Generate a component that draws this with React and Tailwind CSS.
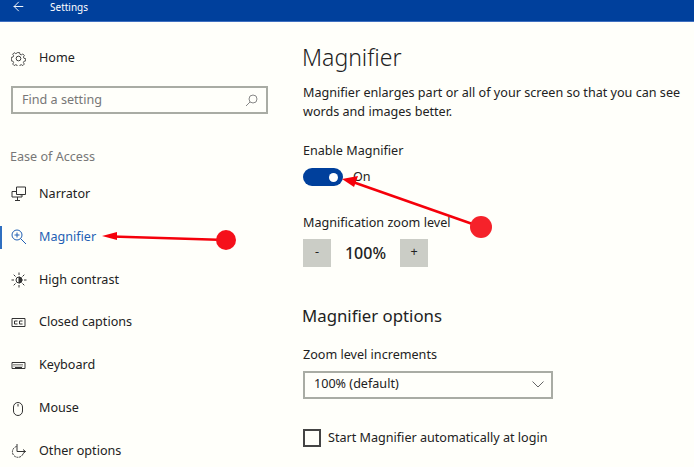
import { ArrowLeft } from 'lucide-react'

const font = { fontFamily: '"Noto Sans", sans-serif' }

function Icon({ children, color = '#333' }) {
  return (
    <svg width="16" height="16" viewBox="0 0 16 16" fill="none" stroke={color} strokeWidth="1">
      {children}
    </svg>
  )
}

const navItems = [
  {
    label: 'Narrator',
    icon: (
      <>
        <path d="M5.500 1h9v7.500h-9z" />
        <path d="M5.500 5.500h-4.500v5.500h10v-2.500M6.500 11v3M4 14.500h5M10 8.500v1" />
      </>
    ),
  },
  {
    label: 'Magnifier',
    active: true,
    icon: (
      <>
        <circle cx="6" cy="6" r="5" />
        <path d="M9.500 9.500l5.500 5.500M3.500 6h5M6 3.500v5" />
      </>
    ),
  },
  {
    label: 'High contrast',
    icon: (
      <>
        <circle cx="8" cy="8" r="3" />
        <path d="M8 5a3 3 0 010 6z" fill="#333" />
        <path d="M8 .5v2.500M8 13v2.500M.5 8H3M13 8h2.500M2.700 2.700l1.800 1.800M11.500 11.500l1.800 1.800M2.700 13.300l1.800-1.800M11.500 4.500l1.800-1.800" />
      </>
    ),
  },
  {
    label: 'Closed captions',
    icon: (
      <>
        <path d="M1 3.500h13v8H1z" />
        <path d="M6.500 6h-3v3h3M11.500 6h-3v3h3" />
      </>
    ),
  },
  {
    label: 'Keyboard',
    icon: (
      <>
        <path d="M1 4.500h13v6H1z" />
        <path d="M2.500 6.500h10M2.500 8h10" strokeDasharray="1 1" />
        <path d="M4 9.500h7" />
      </>
    ),
  },
  {
    label: 'Mouse',
    icon: (
      <>
        <rect x="2.500" y="1.500" width="9" height="13" rx="4.500" />
        <path d="M7 3v2.500" />
      </>
    ),
  },
  {
    label: 'Other options',
    icon: (
      <>
        <path d="M5.500 3.500a5.500 5.500 0 106.800 6.500" strokeDasharray="2 .8" />
        <path d="M6 1v7.500h8.500M12 6.500l2.500 2-2.500 2" />
      </>
    ),
  },
]

export default function App() {
  return (
    <div className="relative h-[467px] w-[694px] overflow-hidden bg-[#fffffa] text-[12.6px] text-[#222]" style={font}>
      <header className="flex h-[22px] items-center border-b border-[#3f6fc0] bg-[#00409c] text-white">
        <div className="flex w-[50px] justify-center pr-[13px] pb-[8px]">
          <ArrowLeft size={15} strokeWidth={1.5} />
        </div>
        <span className="pb-[7px] text-[10px]">Settings</span>
      </header>

      <div className="flex">
        <aside className="w-[290px] shrink-0">
          <div className="mt-[22px] flex h-[28px] items-center gap-[13px] pl-[11px]">
            <svg width="15" height="15" viewBox="0 0 16 16" fill="none" stroke="#333" strokeWidth="1">
              <circle cx="8" cy="8" r="2.500" />
              <path d="M6.700 1h2.600l.4 2 1.600.7 1.800-1.100 1.800 1.800-1.100 1.800.7 1.600 2 .4v2.600l-2 .4-.7 1.600 1.100 1.800-1.800 1.800-1.800-1.100-1.600.7-.4 2H6.700l-.4-2-1.600-.7-1.800 1.100-1.800-1.800 1.100-1.800-.7-1.600-2-.4V6.700l2-.4.7-1.600L1.100 2.900l1.800-1.800 1.800 1.100 1.600-.7z" transform="translate(.8 .8) scale(.9)" />
            </svg>
            <span>Home</span>
          </div>

          <div className="mt-[14px] ml-[11px] flex h-[28px] w-[257px] items-center justify-between border-2 border-[#a9aca4] pr-[8px] pl-[9px] text-[#777]">
            <span>Find a setting</span>
            <svg width="13" height="13" viewBox="0 0 13 13" fill="none" stroke="#888" strokeWidth="1">
              <circle cx="8" cy="5" r="4" />
              <path d="M5 8l-4 4" />
            </svg>
          </div>

          <div className="mt-[34px] ml-[10px] leading-[18px] text-[#777]">Ease of Access</div>

          <nav className="mt-[7px]">
            {navItems.map((item) => (
              <div
                key={item.label}
                className={`flex h-[42.83px] items-center gap-[12px] pl-[11px] ${item.active ? 'text-[#1f5fb4]' : ''}`}
              >
                {item.active && <div className="absolute left-0 h-[23px] w-[2px] bg-[#2f6fc0]" />}
                <Icon color={item.active ? '#1f5fb4' : '#333'}>{item.icon}</Icon>
                <span>{item.label}</span>
              </div>
            ))}
          </nav>
        </aside>

        <main className="flex-1 pl-[13px]">
          <h1 className="mt-[17px] -ml-[1px] text-[23px] leading-[36px] font-light text-[#222]">Magnifier</h1>
          <p className="mt-[8px] w-[385px] leading-[19px]">
            Magnifier enlarges part or all of your screen so that you can see words and images better.
          </p>

          <div className="mt-[21px] leading-[18px]">Enable Magnifier</div>
          <div className="mt-[8px] flex items-center gap-[10px]">
            <div className="flex h-[18px] w-[40px] items-center justify-end rounded-full bg-[#00409c] pr-[5px]">
              <div className="h-[9px] w-[9px] rounded-full bg-white" />
            </div>
            <span>On</span>
          </div>

          <div className="mt-[27px] leading-[18px]">Magnification zoom level</div>
          <div className="mt-[7px] flex items-center">
            <div className="flex h-[28px] w-[28px] items-center justify-center bg-[#cbcdc6]">-</div>
            <div className="w-[69px] text-center text-[16px] font-medium">100%</div>
            <div className="flex h-[28px] w-[28px] items-center justify-center bg-[#cbcdc6]">+</div>
          </div>

          <h2 className="mt-[35px] -ml-[1px] text-[16.8px] leading-[28px]">Magnifier options</h2>
          <div className="mt-[16px] leading-[18px]">Zoom level increments</div>
          <div className="mt-[7px] flex h-[28px] w-[250px] items-center justify-between border-2 border-[#a9aca4] pr-[7px] pl-[9px]">
            <span>100% (default)</span>
            <svg width="12" height="7" viewBox="0 0 12 7" fill="none" stroke="#666" strokeWidth="1">
              <path d="M.5.5L6 6l5.500-5.500" />
            </svg>
          </div>

          <div className="mt-[30px] flex items-center gap-[7px]">
            <div className="h-[18px] w-[18px] border-2 border-[#444]" />
            <span>Start Magnifier automatically at login</span>
          </div>
        </main>
      </div>

      {/* red annotation arrows */}
      <svg className="absolute inset-0" width="694" height="467" fill="none">
        <path d="M226 240L112 236.500" stroke="#f5000a" strokeWidth="2.500" />
        <path d="M102 236l15-4v8z" fill="#f5000a" />
        <circle cx="226" cy="240" r="10" fill="#f5101a" />
        <path d="M481 227L350 181" stroke="#f5000a" strokeWidth="2.500" />
        <path d="M342 179l16-3-4 11z" fill="#f5000a" />
        <circle cx="481" cy="227" r="11" fill="#f5222a" />
      </svg>
    </div>
  )
}
